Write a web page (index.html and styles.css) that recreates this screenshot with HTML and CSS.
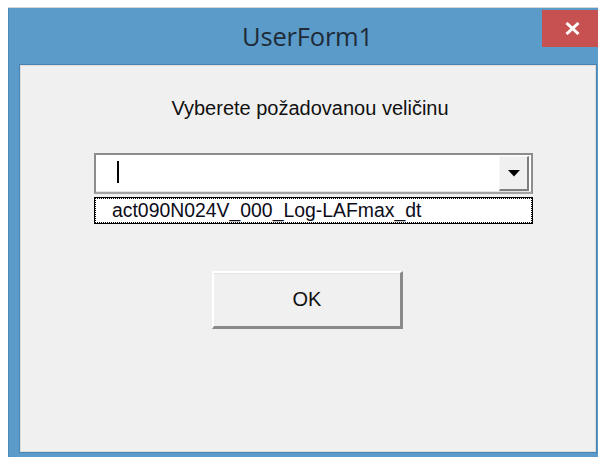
FILE: index.html
```html
<!DOCTYPE html>
<html lang="cs">
<head>
<meta charset="utf-8">
<title>UserForm1</title>
<link rel="stylesheet" href="styles.css">
</head>
<body>
  <div class="window">
    <div class="titlebar">
      <span class="title">UserForm1</span>
      <button class="close" type="button" aria-label="Zavřít">
        <svg width="15" height="13" viewBox="0 0 15 13">
          <path d="M1.5 1 L13.5 12 M13.5 1 L1.5 12" stroke="#fff" stroke-width="3" fill="none"/>
        </svg>
      </button>
    </div>
    <div class="client">
      <p class="prompt">Vyberete požadovanou veličinu</p>
      <div class="combo">
        <div class="field"><span class="caret"></span></div>
        <div class="drop">
          <svg width="12" height="7" viewBox="0 0 12 7"><path d="M0 0 H12 L6 6.5 Z" fill="#000"/></svg>
        </div>
      </div>
      <ul class="list">
        <li class="item">act090N024V_000_Log-LAFmax_dt</li>
      </ul>
      <button class="ok" type="button">OK</button>
    </div>
  </div>
</body>
</html>
```

FILE: styles.css
```css
html, body {
  margin: 0;
  padding: 0;
  background: #ffffff;
  overflow: hidden;
}

body {
  width: 598px;
  height: 457px;
}

/* Windows 8 style dialog frame */
.window {
  margin: 8px 0 0 8px;
  width: 598px;
  height: 460px;
  background: #5b9bc9;
  border-left: 1px solid #4c89b9;
  box-shadow: 0 -1px 0 #d6d6d6;
  box-sizing: border-box;
}

.titlebar {
  display: grid;
  grid-template-columns: 1fr auto 1fr;
  height: 56px;
}

.title {
  grid-column: 2;
  font-family: "Open Sans", "Noto Sans", sans-serif;
  font-size: 25.5px;
  line-height: 56px;
  color: #1f2b38;
  letter-spacing: -0.2px;
}

.close {
  grid-column: 3;
  justify-self: end;
  align-self: start;
  margin: 2px 7px 0 0;
  width: 57px;
  height: 37px;
  padding: 0;
  border: none;
  background: #c75050;
  display: flex;
  align-items: center;
  justify-content: center;
}

.close svg {
  margin: 0 0 0 4px;
}

.client {
  margin-left: 10px;
  width: 578px;
  height: 389px;
  box-sizing: border-box;
  border: 1px solid #4a83b0;
  background: #f0f0f0;
  box-shadow: inset 0 0 0 1px #dedede;
  font-family: "Liberation Sans", Arial, sans-serif;
  font-size: 20px;
  color: #000;
  display: flex;
  flex-direction: column;
  align-items: flex-start;
}

.prompt {
  align-self: stretch;
  margin: 31px 0 0 0;
  padding-left: 4px;
  line-height: 24px;
  text-align: center;
  color: #111;
}

/* combo box: text field + drop button */
.combo {
  margin: 33px 0 0 74px;
  width: 439px;
  height: 41px;
  box-sizing: border-box;
  border: 2px solid #8d8d8d;
  border-bottom-color: #a3a3a3;
  background: #fff;
  display: flex;
  box-shadow: inset 0 -1px 0 #e6e6e6;
}

.field {
  flex: 1;
  display: flex;
  align-items: flex-start;
}

.caret {
  display: block;
  width: 2px;
  height: 22px;
  margin: 6px 0 0 21px;
  background: #000;
}

.drop {
  width: 27px;
  height: 32px;
  margin: 1px 2px 0 0;
  background: #f0f0f0;
  border-top: 1px solid #f7f7f7;
  border-left: 1px solid #f7f7f7;
  border-right: 2px solid #7e7e7e;
  border-bottom: 2px solid #7e7e7e;
  display: flex;
  align-items: center;
  justify-content: center;
}

.drop svg {
  margin-top: 1px;
}

/* open drop-down list with focused item */
.list {
  list-style: none;
  margin: 3px 0 0 74px;
  padding: 0;
  width: 439px;
  height: 27px;
  box-sizing: border-box;
  border: 1px solid #000;
  background: #fff;
}

.item {
  height: 25px;
  box-sizing: border-box;
  border: 1px dotted #000;
  padding-left: 16px;
  font-size: 19.4px;
  line-height: 22px;
  color: #0d0d1a;
  white-space: nowrap;
}

.ok {
  margin: 47px 0 0 192px;
  width: 191px;
  height: 58px;
  padding: 0;
  box-sizing: border-box;
  border-style: solid;
  border-width: 2px 3px 3px 2px;
  border-color: #ffffff #8a8a8a #8a8a8a #ffffff;
  box-shadow: inset 0 1px 0 #e3e3e3;
  background: #f0f0f0;
  font-family: "Liberation Sans", Arial, sans-serif;
  font-size: 20px;
  color: #111;
}
```
